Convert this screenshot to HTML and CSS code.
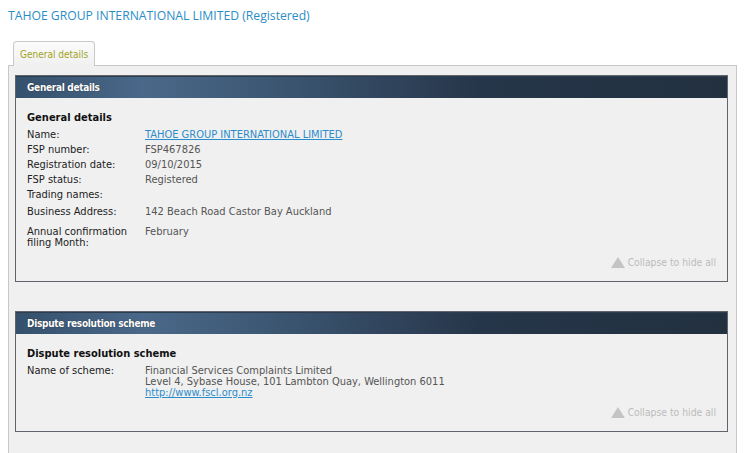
FILE: index.html
```html
<!DOCTYPE html>
<html lang="en">
<head>
  <meta charset="UTF-8">
  <title>TAHOE GROUP INTERNATIONAL LIMITED (Registered)</title>
  <link rel="stylesheet" href="styles.css">
</head>
<body>
  <h1 class="page-title">TAHOE GROUP INTERNATIONAL LIMITED (Registered)</h1>

  <div class="tabs">
    <div class="tab active">General details</div>
  </div>

  <div class="tab-body">
    <div class="panel">
      <div class="panel-head">General details</div>
      <div class="panel-body">
        <h3>General details</h3>
        <div class="row">
          <div class="label">Name:</div>
          <div class="value"><a href="#">TAHOE GROUP INTERNATIONAL LIMITED</a></div>
        </div>
        <div class="row">
          <div class="label">FSP number:</div>
          <div class="value">FSP467826</div>
        </div>
        <div class="row">
          <div class="label">Registration date:</div>
          <div class="value">09/10/2015</div>
        </div>
        <div class="row">
          <div class="label">FSP status:</div>
          <div class="value">Registered</div>
        </div>
        <div class="row">
          <div class="label">Trading names:</div>
          <div class="value"></div>
        </div>
        <div class="row spaced">
          <div class="label">Business Address:</div>
          <div class="value">142 Beach Road Castor Bay Auckland</div>
        </div>
        <div class="row spaced-more">
          <div class="label">Annual confirmation filing Month:</div>
          <div class="value">February</div>
        </div>
        <div class="collapse">
          <span class="arrow"></span>Collapse to hide all
        </div>
      </div>
    </div>

    <div class="panel">
      <div class="panel-head">Dispute resolution scheme</div>
      <div class="panel-body">
        <h3>Dispute resolution scheme</h3>
        <div class="row">
          <div class="label">Name of scheme:</div>
          <div class="value">
            Financial Services Complaints Limited<br>
            Level 4, Sybase House, 101 Lambton Quay, Wellington 6011<br>
            <a href="#">http://www.fscl.org.nz</a>
          </div>
        </div>
        <div class="collapse">
          <span class="arrow"></span>Collapse to hide all
        </div>
      </div>
    </div>
  </div>
</body>
</html>
```

FILE: styles.css
```css
body {
  margin: 0;
  padding: 8px 7px 0 8px;
  background: #fff;
  font-family: 'DejaVu Sans Condensed', 'DejaVu Sans', sans-serif;
  font-size: 11px;
  color: #333;
}

.page-title {
  margin: 0;
  font-family: 'Open Sans', sans-serif;
  font-weight: normal;
  font-size: 12.2px;
  line-height: 16px;
  color: #2a8dc6;
}

.tabs {
  display: flex;
  margin: 17px 0 -1px 5px;
}

.tab {
  height: 24px;
  line-height: 25px;
  padding: 0 6px;
  border: 1px solid #c8c8c8;
  border-bottom: none;
  border-radius: 4px 4px 0 0;
  background: linear-gradient(#fbfbfb, #f0f0f0);
  color: #a3a31e;
  font-size: 10px;
  position: relative;
  z-index: 1;
}

.tab-body {
  border: 1px solid #c8c8c8;
  background: #f0f0f0;
  padding: 9px 8px 20px 6px;
  min-height: 400px;
}

.panel {
  border: 1px solid #5f656b;
  margin-bottom: 29px;
}

.panel-head {
  height: 21px;
  line-height: 21px;
  padding-left: 11px;
  border-top: 1px solid #2c3d50;
  background: linear-gradient(to right, #34506c 0%, #4a6889 18%, #3d5874 35%, #26364a 65%, #22303f 100%);
  color: #fff;
  font-size: 10px;
  font-weight: bold;
  letter-spacing: -0.3px;
  text-shadow: 0 0 1px #1a2430;
}

.panel-body {
  padding: 12px 11px 12px 11px;
  background: #f0f0f0;
}

.panel-body h3 {
  margin: 0 0 1px;
  font-size: 11px;
  line-height: 16px;
  color: #111;
}

.row {
  display: flex;
  padding: 2px 0;
  line-height: 11px;
}

.row.spaced {
  margin-top: 2px;
}

.row.spaced-more {
  margin-top: 5px;
}

.label {
  width: 118px;
  flex-shrink: 0;
  color: #222;
}

.value {
  color: #555;
}

a {
  color: #2b8ccc;
}

.collapse {
  display: flex;
  justify-content: flex-end;
  align-items: center;
  margin-top: 5px;
  line-height: 14px;
  font-size: 10.3px;
  color: #bcbcbc;
}

.arrow {
  width: 0;
  height: 0;
  margin-right: 3px;
  border-left: 7px solid transparent;
  border-right: 7px solid transparent;
  border-bottom: 11px solid #c4c4c4;
}
```
